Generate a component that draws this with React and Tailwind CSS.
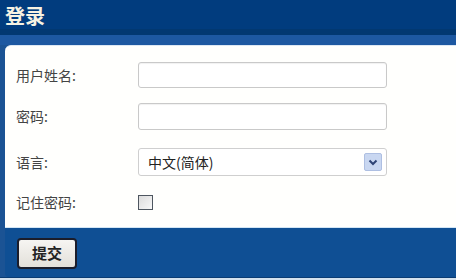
export default function App() {
  return (
    <div className="w-[456px] h-[280px] overflow-hidden flex flex-col bg-[#1b5394] font-['Noto_Sans_CJK_SC',sans-serif]">
      {/* 标题栏 */}
      <div className="h-[35px] bg-[#013c7e] border-b-[6px] border-[#023871] flex items-start pl-[5px] pt-[4px]">
        <h1 className="text-[20px] leading-[24px] font-bold text-[#f7f3e3]">登录</h1>
      </div>
      <div className="h-[10px] bg-[#1d58a1]" />

      {/* 表单 */}
      <div className="ml-[5px] h-[182px] bg-[#fffffd] rounded-tl-[6px] border-t border-[#dde8f4] flex flex-col pt-[16px] pl-[11px] text-[14px] text-[#444]">
        <div className="flex items-center h-[26px]">
          <label className="w-[122px]">用户姓名:</label>
          <input className="w-[249px] h-[26px] border border-[#c9c9c9] rounded-[3px] bg-white shadow-[inset_0_1px_1px_rgba(0,0,0,0.06)] outline-none" />
        </div>
        <div className="flex items-center h-[27px] mt-[15px]">
          <label className="w-[122px]">密码:</label>
          <input type="password" className="w-[249px] h-[27px] border border-[#c9c9c9] rounded-[3px] bg-white shadow-[inset_0_1px_1px_rgba(0,0,0,0.06)] outline-none" />
        </div>
        <div className="flex items-center h-[28px] mt-[18px]">
          <label className="w-[122px]">语言:</label>
          <div className="w-[249px] h-[28px] border border-[#cfcfcf] rounded-[3px] bg-white flex items-center justify-between pl-[9px] pr-[4px]">
            <span className="text-[14px] text-[#222]">中文(简体)</span>
            <span className="w-[18px] h-[18px] rounded-[2px] bg-[#c9d7f1] border border-[#aebfe2] flex items-center justify-center">
              <svg width="10" height="7" viewBox="0 0 10 7">
                <path d="M1.5 1.5 L5 5 L8.5 1.5" fill="none" stroke="#2f4476" strokeWidth="2" />
              </svg>
            </span>
          </div>
        </div>
        <div className="flex items-center h-[16px] mt-[18px]">
          <label className="w-[122px]">记住密码:</label>
          <span className="w-[15px] h-[15px] border border-[#4e5660] bg-gradient-to-br from-[#dcdcdc] to-[#f8f8f8]" />
        </div>
      </div>

      {/* 底栏 */}
      <div className="ml-[5px] h-[50px] bg-[#0f4f94] border-t border-[#d3e6f5] rounded-bl-[4px] flex items-start pl-[12px] pt-[10px]">
        <button className="w-[60px] h-[31px] rounded-[4px] border-2 border-[#1b1d2b] bg-gradient-to-b from-[#f6f5f2] to-[#e3e0da] text-[15px] font-bold text-[#222]">
          提交
        </button>
      </div>
      <div className="h-[1px] bg-[#0a3c74]" />
      <div className="flex-1 bg-[#d5e2ee]" />
    </div>
  );
}
